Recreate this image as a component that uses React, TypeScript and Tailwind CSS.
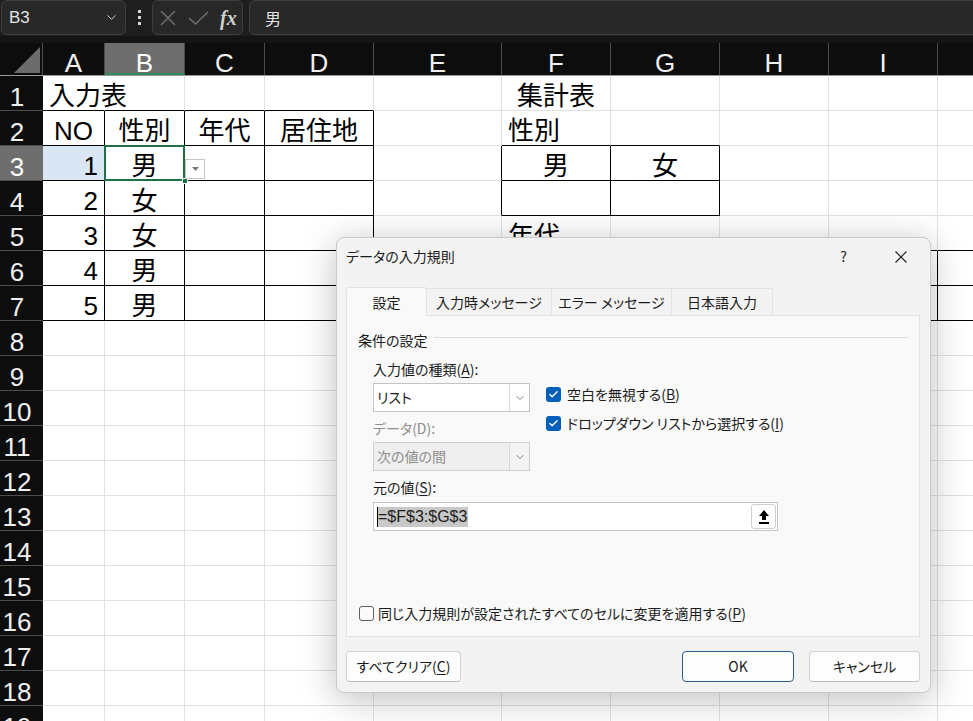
import { ChevronDown, Check } from "lucide-react";
import type { ReactNode } from "react";

type Col = { name: string; label: string; w: string };

const COLS: Col[] = [
  { name: "A", label: "A", w: "w-[62px]" },
  { name: "B", label: "B", w: "w-[80px]" },
  { name: "C", label: "C", w: "w-[80px]" },
  { name: "D", label: "D", w: "w-[109px]" },
  { name: "E", label: "E", w: "w-[128px]" },
  { name: "F", label: "F", w: "w-[109px]" },
  { name: "G", label: "G", w: "w-[109px]" },
  { name: "H", label: "H", w: "w-[109px]" },
  { name: "I", label: "I", w: "w-[109px]" },
  // J is only a sliver at the right edge, its letter is off screen
  { name: "J", label: "", w: "w-[109px]" },
];

const ROWS = Array.from({ length: 19 }, (_, i) => i + 1);

type CellData = { text: string; align: "left" | "center" | "right" };

const DATA: Record<string, CellData> = {
  "1-0": { text: "入力表", align: "left" },
  "2-0": { text: "NO", align: "center" },
  "2-1": { text: "性別", align: "center" },
  "2-2": { text: "年代", align: "center" },
  "2-3": { text: "居住地", align: "center" },
  "3-0": { text: "1", align: "right" },
  "3-1": { text: "男", align: "center" },
  "4-0": { text: "2", align: "right" },
  "4-1": { text: "女", align: "center" },
  "5-0": { text: "3", align: "right" },
  "5-1": { text: "女", align: "center" },
  "6-0": { text: "4", align: "right" },
  "6-1": { text: "男", align: "center" },
  "7-0": { text: "5", align: "right" },
  "7-1": { text: "男", align: "center" },
  "1-5": { text: "集計表", align: "center" },
  "2-5": { text: "性別", align: "left" },
  "3-5": { text: "男", align: "center" },
  "3-6": { text: "女", align: "center" },
  "5-5": { text: "年代", align: "left" },
};

const ALIGN = {
  left: "justify-start pl-[6px]",
  center: "justify-center",
  right: "justify-end pr-[6px]",
};

// ranges that have black borders in the sheet
const inTable = (r: number, c: number) =>
  (r >= 2 && r <= 7 && c >= 0 && c <= 3) ||
  (r >= 3 && r <= 4 && c >= 5 && c <= 6) ||
  (r >= 6 && r <= 7 && c >= 5 && c <= 9);

const Cell = ({ r, c, w }: { r: number; c: number; w: string }) => {
  const d = DATA[`${r}-${c}`];
  const spill = r === 1 && c === 0;
  const right = spill
    ? "border-r-white"
    : inTable(r, c) || inTable(r, c + 1)
      ? "border-r-black"
      : "border-r-[#e1e1e1]";
  const bottom = inTable(r, c) || inTable(r + 1, c) ? "border-b-black" : "border-b-[#e1e1e1]";
  const active = r === 3 && c === 1;
  const bg = r === 3 && c === 0 ? "bg-[#dae6f4]" : "";

  return (
    <div
      className={`relative flex shrink-0 items-start border-r border-b pt-[7px] text-[26px] leading-none text-black ${w} ${right} ${bottom} ${bg} ${d ? ALIGN[d.align] : ""}`}
    >
      {d && <span className={spill ? "relative z-10 whitespace-nowrap" : "whitespace-nowrap"}>{d.text}</span>}
      {active && (
        <>
          <div className="absolute inset-[-1px] z-10 border-2 border-[#1e7145]" />
          <div className="absolute -right-[4px] -bottom-[4px] z-20 h-[6px] w-[6px] border border-white bg-[#1e7145]" />
          <div className="absolute top-[13px] left-[calc(100%+1px)] z-20 flex h-[20px] w-[20px] items-center justify-center border border-[#c6c6c6] bg-white">
            <svg width="7" height="4" viewBox="0 0 7 4">
              <path d="M0 0 H7 L3.5 4 Z" fill="#7a7a7a" />
            </svg>
          </div>
        </>
      )}
    </div>
  );
};

const FormulaBar = () => (
  <div className="flex h-[36px] items-start bg-[#1e1e1e] font-['Liberation_Sans','Noto_Sans_CJK_JP',sans-serif]">
    <div className="ml-[1px] flex h-[35px] w-[125px] shrink-0 items-center justify-between rounded-[6px] border border-[#3f3f3f] bg-[#282828] pr-[6px] pl-[7px]">
      <span className="text-[17px] text-[#e3e3e3]">B3</span>
      <ChevronDown size={15} strokeWidth={1.6} className="text-[#d0d0d0]" />
    </div>
    <div className="flex h-[35px] w-[26px] shrink-0 flex-col items-center justify-center gap-[3px]">
      <span className="h-[3px] w-[3px] bg-[#d8d8d8]" />
      <span className="h-[3px] w-[3px] bg-[#d8d8d8]" />
      <span className="h-[3px] w-[3px] bg-[#d8d8d8]" />
    </div>
    <div className="flex h-[35px] w-[91px] shrink-0 items-center rounded-[6px] border border-[#3f3f3f] bg-[#282828] pl-[7px]">
      <svg width="16" height="16" viewBox="0 0 16 16">
        <path d="M1 1 L15 15 M15 1 L1 15" stroke="#6e6e6e" strokeWidth="1.5" />
      </svg>
      <svg width="21" height="14" viewBox="0 0 21 14" className="ml-[12px]">
        <path d="M1 7 L7.5 13 L20 1" stroke="#6e6e6e" strokeWidth="1.5" fill="none" />
      </svg>
      <span className="ml-[11px] font-['Liberation_Serif',serif] text-[20px] font-bold text-[#cfcfcf] italic">fx</span>
    </div>
    <div className="-mr-[20px] ml-[6px] flex h-[35px] flex-1 items-center rounded-[6px] border border-[#3f3f3f] bg-[#282828] pl-[15px] font-['Noto_Sans_CJK_JP',sans-serif] text-[16px] text-[#e3e3e3]">
      男
    </div>
  </div>
);

const Sheet = () => (
  <div className="font-['Liberation_Sans','Noto_Sans_CJK_JP',sans-serif]">
    <div className="h-[7px] bg-[#141414]" />
    <div className="flex h-[33px] border-b border-[#9a9a9a] bg-[#0d0d0d]">
      <div className="flex w-[43px] shrink-0 items-end justify-end border-r border-[#4a4a4a] pr-[2px] pb-[2px]">
        <svg width="26" height="26" viewBox="0 0 26 26">
          <polygon points="26,0 26,26 0,26" fill="#6b6b6b" />
        </svg>
      </div>
      {COLS.map((col) => (
        <div
          key={col.name}
          className={`flex shrink-0 items-start justify-center border-r border-[#4a4a4a] pt-[7px] text-[26px] leading-none ${col.w} ${
            col.name === "B" ? "border-b-2 border-b-[#2e8a5a] bg-[#6e6e6e] text-white" : "text-[#f0f0f0]"
          }`}
        >
          {col.label}
        </div>
      ))}
    </div>
    {ROWS.map((r) => (
      <div key={r} className="flex h-[35px]">
        <div
          className={`flex w-[43px] shrink-0 items-start justify-center border-b border-[#4d4d4d] pt-[8px] pr-[9px] text-[26px] leading-none ${
            r === 3 ? "bg-[#6e6e6e] text-white" : "bg-[#0d0d0d] text-[#f0f0f0]"
          }`}
        >
          {r}
        </div>
        {COLS.map((col, c) => (
          <Cell key={col.name} r={r} c={c} w={col.w} />
        ))}
      </div>
    ))}
  </div>
);

const Select = ({ value, disabled, className }: { value: string; disabled?: boolean; className?: string }) => (
  <div
    className={`flex h-[29px] w-[157px] items-stretch border ${
      disabled ? "border-[#cfcfcf] bg-[#efefef] text-[#8d8d8d]" : "border-[#c4c4c4] bg-white text-[#1b1b1b]"
    } ${className ?? ""}`}
  >
    <div className="flex flex-1 items-center pl-[3px]">{value}</div>
    <div
      className={`flex w-[20px] items-center justify-center border-l ${
        disabled ? "border-[#d9d9d9] bg-[#f3f3f3]" : "border-[#dadada] bg-white"
      }`}
    >
      <ChevronDown size={12} strokeWidth={1.5} className="text-[#5a5a5a]" />
    </div>
  </div>
);

const CheckRow = ({ label }: { label: ReactNode }) => (
  <div className="flex h-[20px] items-center gap-[6px]">
    <div className="flex h-[15px] w-[15px] items-center justify-center rounded-[3px] bg-[#005fb8]">
      <Check size={11} strokeWidth={3} className="text-white" />
    </div>
    <span>{label}</span>
  </div>
);

const Btn = ({ children, w, primary }: { children: ReactNode; w: string; primary?: boolean }) => (
  <button
    className={`flex h-[31px] items-center justify-center rounded-[4px] border bg-[#fdfdfd] text-[14px] text-[#1b1b1b] ${w} ${
      primary ? "border-[#2a5d8f]" : "border-[#d1d1d1] border-b-[#bdbdbd]"
    }`}
  >
    {children}
  </button>
);

const U = ({ children }: { children: ReactNode }) => <span className="underline underline-offset-2">{children}</span>;

const Dialog = () => (
  <div className="absolute top-[237px] left-[336px] z-30 flex h-[456px] w-[595px] flex-col rounded-[8px] border border-[#c9c9c9] bg-[#f3f3f3] font-['Noto_Sans_CJK_JP',sans-serif] text-[14px] text-[#1b1b1b] shadow-[0_6px_36px_rgba(0,0,0,0.26)] [font-feature-settings:'palt']">
    <div className="flex h-[37px] shrink-0 items-center justify-between pr-[23px] pl-[9px]">
      <span>データの入力規則</span>
      <div className="flex items-center gap-[48px]">
        <span className="text-[14px]">?</span>
        <svg width="12" height="12" viewBox="0 0 12 12">
          <path d="M0.5 0.5 L11.5 11.5 M11.5 0.5 L0.5 11.5" stroke="#1b1b1b" strokeWidth="1.1" />
        </svg>
      </div>
    </div>
    <div className="h-[12px] shrink-0" />
    <div className="flex h-[28px] shrink-0 items-end pl-[9px]">
      <div className="relative z-10 -mb-px flex h-[29px] w-[81px] items-center justify-center rounded-t-[3px] border border-b-0 border-[#e3e3e3] bg-[#f9f9f9]">
        設定
      </div>
      <div className="flex h-[27px] w-[125px] items-center justify-center border-t border-r border-[#e3e3e3]">入力時メッセージ</div>
      <div className="flex h-[27px] w-[120px] items-center justify-center border-t border-r border-[#e3e3e3]">エラー メッセージ</div>
      <div className="flex h-[27px] w-[101px] items-center justify-center border-t border-r border-[#e3e3e3]">日本語入力</div>
    </div>
    <div className="ml-[9px] flex h-[322px] w-[574px] shrink-0 flex-col border border-[#e3e3e3] bg-[#f9f9f9]">
      <div className="mt-[14px] flex h-[20px] items-center pr-[11px] pl-[11px]">
        <span>条件の設定</span>
        <div className="mt-[-5px] ml-[6px] h-px flex-1 bg-[#dcdcdc]" />
      </div>
      <div className="mt-[9px] flex pl-[26px]">
        <div className="flex w-[157px] flex-col">
          <div className="h-[20px] leading-[20px] whitespace-nowrap">
            入力値の種類(<U>A</U>):
          </div>
          <Select className="mt-[4px]" value="リスト" />
          <div className="mt-[6px] h-[20px] leading-[20px] text-[#8d8d8d]">データ(D):</div>
          <Select className="mt-[4px]" value="次の値の間" disabled />
        </div>
        <div className="mt-[25px] ml-[16px] flex flex-col gap-[9px]">
          <CheckRow label={<>空白を無視する(<U>B</U>)</>} />
          <CheckRow label={<>ドロップダウン リストから選択する(<U>I</U>)</>} />
        </div>
      </div>
      <div className="mt-[6px] h-[20px] pl-[26px] leading-[20px]">
        元の値(<U>S</U>):
      </div>
      <div className="mt-[5px] ml-[26px] flex h-[29px] w-[405px] items-center border border-[#c4c4c4] bg-white pl-[3px]">
        <span className="h-[20px] w-px bg-black" />
        <span className="bg-[#c8c8c8] pr-[1px] font-['Liberation_Sans',sans-serif] text-[16px] leading-[20px]">=$F$3:$G$3</span>
        <div className="mr-px ml-auto flex h-[25px] w-[25px] items-center justify-center rounded-[3px] border border-[#cfcfcf] bg-white">
          <svg width="12" height="16" viewBox="0 0 12 16">
            <path d="M6 1 L11 7 H8 V11 H4 V7 H1 Z" fill="#000" />
            <rect x="1" y="13" width="10" height="2" fill="#000" />
          </svg>
        </div>
      </div>
      <div className="mt-auto mb-[13px] flex h-[20px] items-center gap-[4px] pl-[12px]">
        <div className="h-[15px] w-[15px] rounded-[3px] border border-[#5f5f5f] bg-[#fbfbfb]" />
        <span>
          同じ入力規則が設定されたすべてのセルに変更を適用する(<U>P</U>)
        </span>
      </div>
    </div>
    <div className="mt-[14px] flex justify-between pr-[10px] pl-[9px]">
      <Btn w="w-[115px]">
        すべてクリア(<U>C</U>)
      </Btn>
      <div className="flex gap-[15px]">
        <Btn w="w-[112px]" primary>
          OK
        </Btn>
        <Btn w="w-[111px]">キャンセル</Btn>
      </div>
    </div>
  </div>
);

export default function App() {
  return (
    <div className="relative h-[721px] w-[973px] overflow-hidden bg-white">
      <FormulaBar />
      <Sheet />
      <Dialog />
    </div>
  );
}
